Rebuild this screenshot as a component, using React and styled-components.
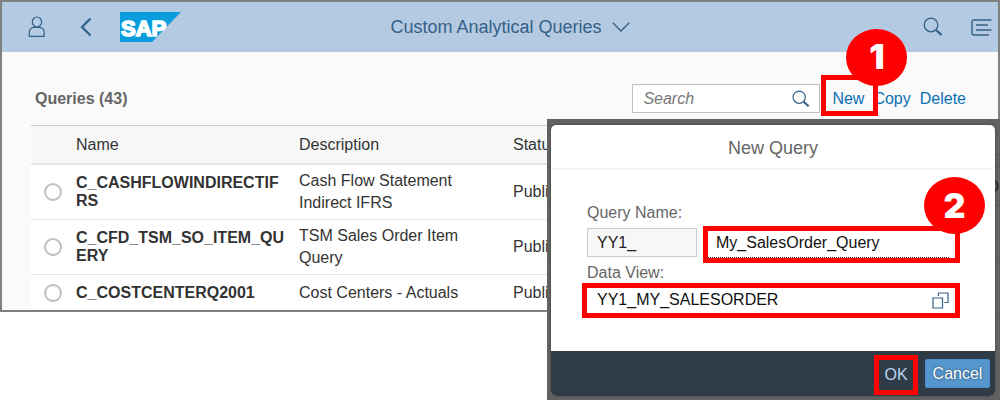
import React from "react";
import styled, { createGlobalStyle } from "styled-components";

const GlobalStyle = createGlobalStyle`
  *, *::before, *::after { box-sizing: border-box; }
  body {
    margin: 0;
    background: #fff;
    color: #333;
    font-family: "Liberation Sans", Arial, sans-serif;
    font-size: 16px;
  }
  button, input { font: inherit; }
`;

const Stage = styled.div`
  position: relative;
  min-height: 400px;
  overflow: hidden;
`;

const Window = styled.main`
  border: 2px solid #808080;
  background: #fafafa;
`;

const ShellBar = styled.header`
  display: grid;
  grid-template-columns: 1fr auto 1fr;
  align-items: center;
  height: 50px;
  padding: 0 6px 0 26px;
  background: #b4cae3;
  color: #346187;
`;

const ShellGroup = styled.div`
  display: flex;
  align-items: center;
  justify-content: ${(p) => (p.$end ? "flex-end" : "flex-start")};
  gap: 28px;
`;

const IconButton = styled.button`
  display: flex;
  padding: 0;
  border: 0;
  background: none;
  color: inherit;
`;

const ShellTitle = styled.button`
  display: flex;
  align-items: center;
  gap: 10px;
  padding: 0;
  border: 0;
  background: none;
  color: inherit;
  font-size: 18px;
  line-height: 22px;
  white-space: nowrap;
`;

const Toolbar = styled.div`
  display: flex;
  align-items: center;
  height: 73px;
  padding: 20px 32px 0 33px;
`;

const Heading = styled.h1`
  margin: 0 auto 0 0;
  color: #666;
  font-size: 16px;
  line-height: 20px;
`;

const SearchField = styled.label`
  display: flex;
  align-items: center;
  width: 188px;
  height: 29px;
  margin-right: 12px;
  padding: 0 9px 0 10px;
  border: 1px solid #bfbfbf;
  background: #fff;
  color: #346187;
`;

const SearchInput = styled.input`
  flex: 1;
  min-width: 0;
  padding: 0;
  border: 0;
  outline: 0;
  background: none;
  &::placeholder { color: #777; font-style: italic; opacity: 1; }
`;

const Actions = styled.div`
  display: flex;
  gap: 9px;
`;

const Action = styled.button`
  padding: 0;
  border: 0;
  background: none;
  color: #0b6fb4;
  line-height: 20px;
`;

const Highlight = styled.div`
  position: relative;
  display: flex;
  z-index: 1;
  &::after {
    content: "";
    position: absolute;
    inset: -14px -14px -7px -11px;
    border: 5px solid #f00;
    pointer-events: none;
  }
`;

const Badge = styled.span`
  position: absolute;
  z-index: 2;
  top: ${(p) => p.$top}px;
  right: ${(p) => p.$right}px;
  display: flex;
  align-items: center;
  justify-content: center;
  width: 61px;
  height: 57px;
  border-radius: 50%;
  background: #f00;
  color: #fff;
  font-family: Inter, sans-serif;
  font-size: 34px;
  font-weight: 900;
  line-height: 40px;
`;

const Table = styled.table`
  width: calc(100% - 29px);
  margin-left: 29px;
  border-collapse: separate;
  border-spacing: 0;
  border-top: 1px solid #ccc;
  table-layout: fixed;
  background: #fff;
`;

const Col = styled.col`
  width: ${(p) => p.$width}px;
`;

const HeadCell = styled.th`
  height: 39px;
  padding: 0;
  border-bottom: 2px solid #e5e5e5;
  background: #f7f7f7;
  font-weight: 400;
  text-align: left;
`;

const Row = styled.tr`
  &:not(:last-child) > td { border-bottom: 1px solid #e5e5e5; }
  &:last-child > td { height: 35px; }
`;

const Cell = styled.td`
  height: 55px;
  padding: 0 32px 0 0;
  line-height: 22px;
`;

const RadioCell = styled(Cell)`
  padding: 0 0 0 13px;
`;

const NameCell = styled(Cell)`
  padding-right: 12px;
  font-weight: 700;
  line-height: 18px;
  word-break: break-all;
`;

const Radio = styled.input.attrs({ type: "radio" })`
  appearance: none;
  display: block;
  width: 18px;
  height: 18px;
  margin: 0;
  border: 2px solid #bfbfbf;
  border-radius: 50%;
  background: #fff;
`;

const Backdrop = styled.div`
  position: absolute;
  top: 119px;
  right: 0;
  width: 453px;
  padding: 6px 5px 4px 4px;
  overflow: hidden;
  background:
    linear-gradient(#575757, #575757) 0 35px / 100% 1px no-repeat,
    linear-gradient(#575757, #575757) 0 48px / 100% 1px no-repeat,
    linear-gradient(#575757, #575757) 0 86px / 100% 1px no-repeat,
    linear-gradient(#575757, #575757) 0 141px / 100% 1px no-repeat,
    linear-gradient(#575757, #575757) 0 196px / 100% 1px no-repeat,
    #626262;
`;

const CoveredText = styled.span`
  position: absolute;
  top: 58px;
  right: 1px;
  color: #222;
  line-height: 20px;
`;

const Dialog = styled.form`
  position: relative;
  border-radius: 5px;
  background: #fff;
  box-shadow: 0 0 2px #333;
`;

const DialogTitle = styled.h2`
  height: 45px;
  margin: 0 2px;
  padding-top: 2px;
  border-bottom: 2px solid #f2f2f2;
  color: #666;
  font-size: 18px;
  font-weight: 400;
  line-height: 42px;
  text-align: center;
`;

const DialogBody = styled.div`
  display: flex;
  flex-direction: column;
  height: 181px;
  padding: 33px 40px 0 36px;
`;

const Label = styled.label`
  color: #666;
  line-height: 20px;
`;

const NameRow = styled.div`
  display: flex;
  justify-content: space-between;
  align-items: center;
  padding-top: 3px;
`;

const Prefix = styled.input`
  width: 110px;
  height: 29px;
  padding: 0 9px;
  margin-bottom: 4px;
  border: 1px solid #ccc;
  outline: 0;
  background: #f7f7f7;
  color: #222;
`;

const Marked = styled.div`
  display: flex;
  align-items: center;
  width: ${(p) => p.$width};
  height: ${(p) => p.$height}px;
  margin: ${(p) => p.$margin};
  padding-right: 6px;
  border: 5px solid #f00;
  background: #fff;
  color: #346187;
`;

const TextInput = styled.input`
  flex: 1;
  min-width: 0;
  height: 100%;
  padding: 0 0 2px ${(p) => p.$indent}px;
  border: 0;
  outline: 0;
  background: none;
  color: #111;
`;

const FocusedInput = styled(TextInput)`
  border-bottom: 1px dotted #222;
`;

const DialogFooter = styled.footer`
  display: flex;
  align-items: center;
  justify-content: flex-end;
  gap: 7px;
  height: 45px;
  padding: 0 5px;
  border-radius: 0 0 5px 5px;
  background: #2f3c48;
`;

const OkButton = styled.button`
  width: 44px;
  height: 40px;
  margin-top: 3px;
  padding: 0;
  border: 5px solid #f00;
  background: transparent;
  color: #b8d5f1;
`;

const CancelButton = styled.button`
  width: 65px;
  height: 29px;
  padding: 0;
  border: 1px solid #4c8ecb;
  border-radius: 2px;
  background: #5496cd;
  color: #fff;
  text-shadow: 0 0 2px #234;
`;

const SearchIcon = ({ size }) => (
  <svg width={size} height={size} viewBox="0 0 20 20" fill="none" stroke="currentColor" aria-hidden="true">
    <circle cx="8" cy="8" r="6.8" strokeWidth="1.3" />
    <path d="M13 13l5.5 5" strokeWidth="2.3" />
  </svg>
);

const UserIcon = () => (
  <svg width="18" height="22" viewBox="0 0 18 22" fill="none" stroke="currentColor" strokeWidth="1.2" aria-hidden="true">
    <ellipse cx="9" cy="6" rx="4.7" ry="5" />
    <path d="M5.5 11.3C2.500 12 1.300 14 1.300 16.500v3.800h14.900v-3.800c0-2.500-1.200-4.500-4.200-5.200M5.500 11.300h6.500" />
  </svg>
);

const BackIcon = () => (
  <svg width="18" height="20" viewBox="-6 0 18 20" fill="none" stroke="currentColor" strokeWidth="2.3" aria-hidden="true">
    <path d="M10.5 1.5L2 10l8.5 8.5" />
  </svg>
);

const DownIcon = () => (
  <svg width="18" height="10" viewBox="0 0 18 10" fill="none" stroke="currentColor" strokeWidth="1.4" aria-hidden="true">
    <path d="M.8.8L9 9 17.2.8" />
  </svg>
);

const ListIcon = () => (
  <svg width="21" height="17" viewBox="0 0 21 17" fill="none" stroke="currentColor" strokeWidth="1.4" aria-hidden="true">
    <path d="M20.500 1H3Q1 1 1 3v11q0 2 2 2h15M5 6h12M5 11h15.500" />
  </svg>
);

const ValueHelpIcon = () => (
  <svg width="17" height="17" viewBox="0 0 17 17" fill="none" stroke="currentColor" strokeWidth="1.2" aria-hidden="true">
    <path d="M1 6h9.500v10H1zM6.500 4V1h9.500v9.500h-3.500" />
  </svg>
);

const SapLogo = () => (
  <svg width="61" height="30" viewBox="0 0 61 30" role="img" aria-label="SAP">
    <path d="M0 0h61L32 30H0z" fill="#0a9ddd" />
    <text x="1" y="24" fill="#fff" stroke="#fff" strokeWidth="1.6" fontFamily="Liberation Sans, Arial, sans-serif" fontSize="22" fontWeight="700">SAP</text>
  </svg>
);

const queries = [
  { name: "C_CASHFLOWINDIRECTIFRS", description: "Cash Flow Statement Indirect IFRS" },
  { name: "C_CFD_TSM_SO_ITEM_QUERY", description: "TSM Sales Order Item Query" },
  { name: "C_COSTCENTERQ2001", description: "Cost Centers - Actuals" },
];

export default function App() {
  return (
    <Stage>
      <GlobalStyle />
      <Window>
        <ShellBar>
          <ShellGroup>
            <IconButton aria-label="User"><UserIcon /></IconButton>
            <IconButton aria-label="Back"><BackIcon /></IconButton>
            <SapLogo />
          </ShellGroup>
          <ShellTitle>Custom Analytical Queries<DownIcon /></ShellTitle>
          <ShellGroup $end>
            <IconButton aria-label="Search"><SearchIcon size={20} /></IconButton>
            <IconButton aria-label="Notifications"><ListIcon /></IconButton>
          </ShellGroup>
        </ShellBar>

        <Toolbar>
          <Heading>Queries (43)</Heading>
          <SearchField>
            <SearchInput placeholder="Search" aria-label="Search queries" />
            <SearchIcon size={18} />
          </SearchField>
          <Actions>
            <Highlight>
              <Action>New</Action>
              <Badge $top={-60} $right={-43}>1</Badge>
            </Highlight>
            <Action>Copy</Action>
            <Action>Delete</Action>
          </Actions>
        </Toolbar>

        <Table>
          <colgroup>
            <Col $width={45} />
            <Col $width={223} />
            <Col $width={214} />
            <col />
          </colgroup>
          <thead>
            <tr>
              <HeadCell aria-label="Selection" />
              <HeadCell>Name</HeadCell>
              <HeadCell>Description</HeadCell>
              <HeadCell>Status</HeadCell>
            </tr>
          </thead>
          <tbody>
            {queries.map((q) => (
              <Row key={q.name}>
                <RadioCell><Radio name="query" aria-label={q.name} /></RadioCell>
                <NameCell>{q.name}</NameCell>
                <Cell>{q.description}</Cell>
                <Cell>Published</Cell>
              </Row>
            ))}
          </tbody>
        </Table>
      </Window>

      <Backdrop>
        <CoveredText aria-hidden="true">D</CoveredText>
        <Dialog onSubmit={(e) => e.preventDefault()}>
          <DialogTitle>New Query</DialogTitle>
          <DialogBody>
            <Label htmlFor="query-name">Query Name:</Label>
            <NameRow>
              <Prefix aria-label="Prefix" readOnly value="YY1_" />
              <Marked $width="257px" $height={37} $margin="0 -5px 0 0">
                <FocusedInput id="query-name" $indent={8} defaultValue="My_SalesOrder_Query" />
              </Marked>
            </NameRow>
            <Label htmlFor="data-view">Data View:</Label>
            <Marked $width="auto" $height={35} $margin="0 -5px">
              <TextInput id="data-view" $indent={10} defaultValue="YY1_MY_SALESORDER" />
              <IconButton type="button" aria-label="Choose data view"><ValueHelpIcon /></IconButton>
            </Marked>
          </DialogBody>
          <DialogFooter>
            <OkButton type="submit">OK</OkButton>
            <CancelButton type="button">Cancel</CancelButton>
          </DialogFooter>
          <Badge $top={52} $right={10}>2</Badge>
        </Dialog>
      </Backdrop>
    </Stage>
  );
}
